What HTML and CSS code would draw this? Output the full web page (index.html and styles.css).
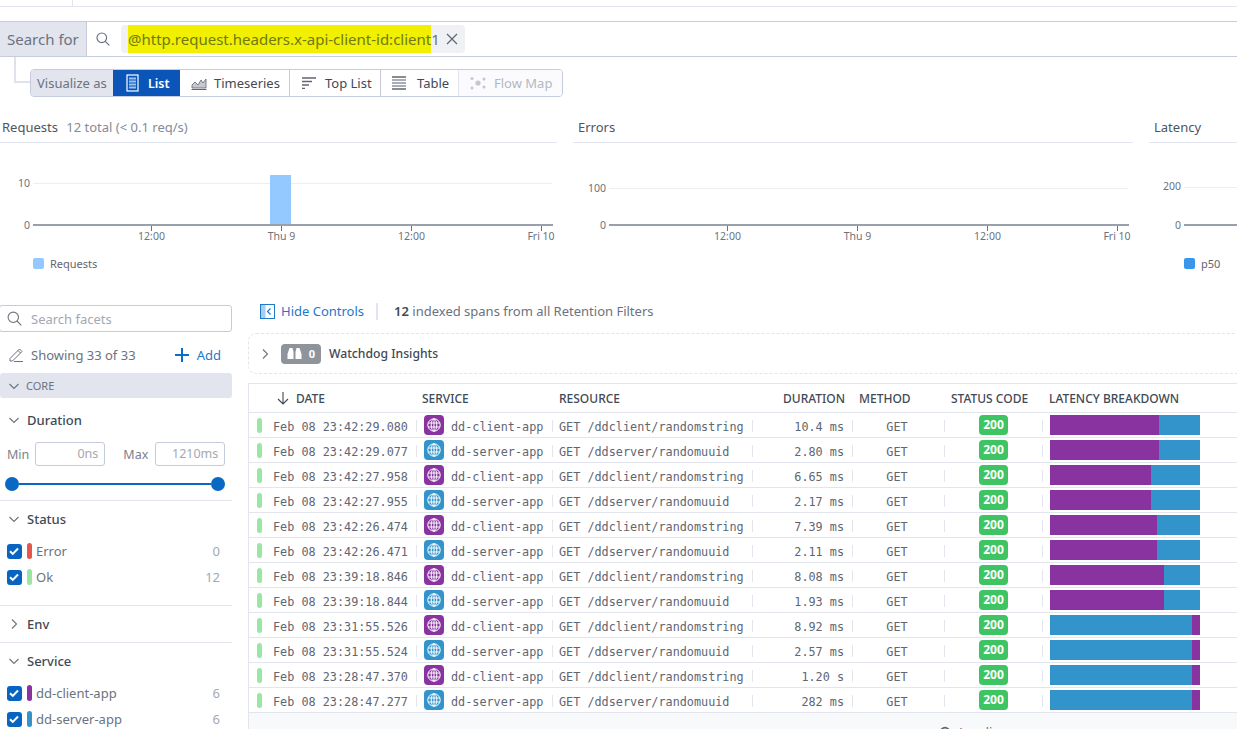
FILE: index.html
```html
<!DOCTYPE html>
<html lang="en">
<head>
<meta charset="utf-8">
<title>Trace Explorer</title>
<link rel="stylesheet" href="styles.css">
</head>
<body>
<svg class="defs" width="0" height="0">
  <symbol id="globe" viewBox="0 0 20 20">
    <g fill="none" stroke="#fff" stroke-width="1">
      <circle cx="10" cy="10" r="6.200"/>
      <ellipse cx="10" cy="10" rx="2.800" ry="6.200"/>
      <path d="M10 3.800v12.400M4.200 8h11.600M4.200 12h11.600"/>
    </g>
  </symbol>
  <symbol id="chev-down" viewBox="0 0 12 12"><path d="M1.500 4l4.500 4.500L10.500 4" fill="none" stroke="#6b7280" stroke-width="1.100"/></symbol>
  <symbol id="chev-right" viewBox="0 0 12 12"><path d="M4 1.500L8.500 6 4 10.500" fill="none" stroke="#6b7280" stroke-width="1.100"/></symbol>
  <symbol id="check" viewBox="0 0 14 14"><path d="M3 7.200l2.800 2.700L11 4.500" fill="none" stroke="#fff" stroke-width="2"/></symbol>
</svg>

<div class="topstrip"><span class="topstrip-tick"></span></div>

<div class="searchbar">
  <div class="search-label">Search for</div>
  <svg class="search-icon" width="14" height="14" viewBox="0 0 14 14"><circle cx="5.800" cy="5.800" r="4.800" fill="none" stroke="#6b7280" stroke-width="1.200"/><path d="M9.300 9.300L13.300 13.300" stroke="#6b7280" stroke-width="1.200"/></svg>
  <div class="chip"><span class="chip-text"><mark class="hl">@http.request.headers.x-api-client-id:client</mark>1</span>
    <svg class="chip-x" width="12" height="12" viewBox="0 0 12 12"><path d="M1 1l10 10M11 1L1 11" stroke="#5f6672" stroke-width="1.200"/></svg>
  </div>
</div>

<div class="vizrow">
  <span class="connector"></span>
  <div class="viz">
    <div class="viz-label">Visualize as</div>
    <div class="viz-btn viz-list">
      <svg width="13" height="18" viewBox="0 0 13 18"><rect x="1" y="1" width="11" height="16" fill="none" stroke="#fff" stroke-width="1.200"/><path d="M3 4.500h7M3 7.500h7M3 10.500h7M3 13.500h7" stroke="#9cc2ee" stroke-width="2"/></svg>
      <span>List</span>
    </div>
    <div class="viz-btn viz-ts">
      <svg width="16" height="13" viewBox="0 0 16 13"><path d="M0.500 12.500h15" stroke="#5f6672"/><path d="M1 11V8l3-3 3 3 3-5 2 3 3-4v9z" fill="#c5c9d2" stroke="#5f6672" stroke-width=".8"/></svg>
      <span>Timeseries</span>
    </div>
    <div class="viz-btn viz-top">
      <svg width="14" height="12" viewBox="0 0 14 12"><path d="M0 1h14M0 4.500h10M0 8h7M0 11.300h3" stroke="#5f6672" stroke-width="1.300"/></svg>
      <span>Top List</span>
    </div>
    <div class="viz-btn viz-table">
      <svg width="14" height="14" viewBox="0 0 14 14"><path d="M0 1h14M0 13h14" stroke="#5f6672" stroke-width="1.300"/><path d="M0 4h14M0 7h14M0 10h14" stroke="#a8adb8" stroke-width="2"/></svg>
      <span>Table</span>
    </div>
    <div class="viz-btn viz-flow">
      <svg width="16" height="14" viewBox="0 0 16 14"><g fill="#c3c7cf"><circle cx="8" cy="7" r="2.600"/><circle cx="2" cy="2.500" r="1.500"/><circle cx="2" cy="12" r="1.500"/><circle cx="14" cy="3" r="1.500"/><circle cx="14" cy="11" r="1.500"/></g></svg>
      <span>Flow Map</span>
    </div>
  </div>
</div>

<div class="charts">
  <section class="chart chart-req">
    <h3 class="chart-title">Requests <span class="chart-sub">12 total (&lt; 0.1 req/s)</span></h3>
    <svg class="plot" width="557" height="104" viewBox="0 143 557 104">
      <path class="grid" d="M33 183.500H552"/>
      <rect x="270" y="175" width="21" height="50" fill="#94c9ff"/>
      <path class="axis" d="M33 225H553"/>
      <path class="tick" d="M151.500 226v5M281.500 226v5M411.500 226v5M541.500 226v5"/>
      <text class="lbl" x="30" y="187" text-anchor="end">10</text>
      <text class="lbl" x="30" y="229" text-anchor="end">0</text>
      <text class="lbl" x="151.500" y="240" text-anchor="middle">12:00</text>
      <text class="lbl" x="281.500" y="240" text-anchor="middle">Thu 9</text>
      <text class="lbl" x="411.500" y="240" text-anchor="middle">12:00</text>
      <text class="lbl" x="541" y="240" text-anchor="middle">Fri 10</text>
    </svg>
    <div class="legend legend-req"><i class="swatch swatch-req"></i>Requests</div>
  </section>
  <section class="chart chart-err">
    <h3 class="chart-title">Errors</h3>
    <svg class="plot" width="560" height="104" viewBox="573 143 560 104">
      <path class="grid" d="M609 188.500H1128"/>
      <path class="axis" d="M609 225H1129"/>
      <path class="tick" d="M727.500 226v5M857.500 226v5M987.500 226v5M1117.500 226v5"/>
      <text class="lbl" x="606" y="192" text-anchor="end">100</text>
      <text class="lbl" x="606" y="229" text-anchor="end">0</text>
      <text class="lbl" x="727.500" y="240" text-anchor="middle">12:00</text>
      <text class="lbl" x="857.500" y="240" text-anchor="middle">Thu 9</text>
      <text class="lbl" x="987.500" y="240" text-anchor="middle">12:00</text>
      <text class="lbl" x="1117" y="240" text-anchor="middle">Fri 10</text>
    </svg>
  </section>
  <section class="chart chart-lat">
    <h3 class="chart-title">Latency</h3>
    <svg class="plot" width="100" height="104" viewBox="1149 143 100 104">
      <path class="grid" d="M1184 187.500H1249"/>
      <path class="axis" d="M1184 225H1249"/>
      <text class="lbl" x="1181" y="190" text-anchor="end">200</text>
      <text class="lbl" x="1181" y="229" text-anchor="end">0</text>
    </svg>
    <div class="legend legend-lat"><i class="swatch swatch-lat"></i>p50</div>
  </section>
</div>

<main class="main">
  <aside class="side">
    <div class="facet-search">
      <svg width="15" height="15" viewBox="0 0 15 15"><circle cx="6.300" cy="6.300" r="5.200" fill="none" stroke="#6b7280" stroke-width="1.100"/><path d="M10 10l4.300 4.300" stroke="#6b7280" stroke-width="1.100"/></svg>
      <span>Search facets</span>
    </div>
    <div class="showing">
      <svg width="15" height="15" viewBox="0 0 15 15"><path d="M1 11.500L10.500 2l2.500 2.500L3.500 14H1zM9 3.500l2.500 2.500" fill="none" stroke="#6b7280"/><path d="M5 14.500h9" stroke="#6b7280"/></svg>
      <span class="showing-text">Showing 33 of 33</span>
      <span class="add"><svg width="14" height="14" viewBox="0 0 14 14"><path d="M7 0v14M0 7h14" stroke="#0a6ec5" stroke-width="2"/></svg>Add</span>
    </div>
    <div class="core"><svg width="12" height="12"><use href="#chev-down"/></svg>CORE</div>

    <div class="facet facet-duration">
      <div class="facet-head"><svg width="12" height="12"><use href="#chev-down"/></svg>Duration</div>
      <div class="minmax">
        <span>Min</span><span class="mm-input">0ns</span>
        <span class="max-label">Max</span><span class="mm-input mm-max">1210ms</span>
      </div>
      <div class="slider"><i class="knob"></i><i class="track"></i><i class="knob"></i></div>
    </div>

    <div class="facet facet-status">
      <div class="facet-head"><svg width="12" height="12"><use href="#chev-down"/></svg>Status</div>
      <ul class="values">
        <li><span class="cb"><svg width="14" height="14"><use href="#check"/></svg></span><i class="tag red"></i><span class="v">Error</span><span class="n">0</span></li>
        <li><span class="cb"><svg width="14" height="14"><use href="#check"/></svg></span><i class="tag green"></i><span class="v">Ok</span><span class="n">12</span></li>
      </ul>
    </div>

    <div class="facet facet-env">
      <div class="facet-head"><svg width="12" height="12"><use href="#chev-right"/></svg>Env</div>
    </div>

    <div class="facet facet-service">
      <div class="facet-head"><svg width="12" height="12"><use href="#chev-down"/></svg>Service</div>
      <ul class="values">
        <li><span class="cb"><svg width="14" height="14"><use href="#check"/></svg></span><i class="tag purple"></i><span class="v">dd-client-app</span><span class="n">6</span></li>
        <li><span class="cb"><svg width="14" height="14"><use href="#check"/></svg></span><i class="tag blue"></i><span class="v">dd-server-app</span><span class="n">6</span></li>
      </ul>
    </div>
  </aside>

  <div class="content">
    <div class="controls">
      <svg width="15" height="15" viewBox="0 0 15 15"><rect x=".5" y=".5" width="14" height="14" fill="none" stroke="#1f78c8"/><rect x="1" y="1" width="4.500" height="13" fill="#a9cdef"/><path d="M10.500 4.500L7.500 7.500l3 3" fill="none" stroke="#1f78c8" stroke-width="1.200"/></svg>
      <span class="hide">Hide Controls</span>
      <i class="ctl-sep"></i>
      <span class="count"><b>12</b> indexed spans from all Retention Filters</span>
    </div>

    <div class="watchdog">
      <svg width="12" height="12"><use href="#chev-right"/></svg>
      <span class="wd-badge">
        <svg width="15" height="13" viewBox="0 0 15 13"><path d="M2.500 1h3l1 4v7H0.500V7zM9.500 1h3l2 6v5H8.500V5z" fill="#fff"/></svg>
        <b>0</b>
      </span>
      <span class="wd-text">Watchdog Insights</span>
    </div>

    <div class="table">
      <div class="row head">
        <div class="h-date"><svg width="12" height="14" viewBox="0 0 12 14"><path d="M6 1v12M1 8l5 5 5-5" fill="none" stroke="#3f4a56" stroke-width="1.100"/></svg>DATE</div>
        <div class="h-service">SERVICE</div>
        <div class="h-resource">RESOURCE</div>
        <div class="h-duration">DURATION</div>
        <div class="h-method">METHOD</div>
        <div class="h-status">STATUS CODE</div>
        <div class="h-latency">LATENCY BREAKDOWN</div>
      </div>

      <div class="row"><div class="c-pill"><i></i></div><div class="c-date t">Feb 08 23:42:29.080</div><div class="c c-service"><span class="svc svc-client"><svg width="20" height="20"><use href="#globe"/></svg></span><span class="t">dd-client-app</span></div><div class="c c-res"><span class="t">GET /ddclient/randomstring</span></div><div class="c c-dur"><span class="t">10.4 ms</span></div><div class="c c-meth"><span class="t">GET</span></div><div class="c c-stat"><b class="code">200</b></div><div class="c c-lat"><span class="bar"><i class="p" style="width:109px"></i><i class="b"></i></span></div></div>
      <div class="row"><div class="c-pill"><i></i></div><div class="c-date t">Feb 08 23:42:29.077</div><div class="c c-service"><span class="svc svc-server"><svg width="20" height="20"><use href="#globe"/></svg></span><span class="t">dd-server-app</span></div><div class="c c-res"><span class="t">GET /ddserver/randomuuid</span></div><div class="c c-dur"><span class="t">2.80 ms</span></div><div class="c c-meth"><span class="t">GET</span></div><div class="c c-stat"><b class="code">200</b></div><div class="c c-lat"><span class="bar"><i class="p" style="width:109px"></i><i class="b"></i></span></div></div>
      <div class="row"><div class="c-pill"><i></i></div><div class="c-date t">Feb 08 23:42:27.958</div><div class="c c-service"><span class="svc svc-client"><svg width="20" height="20"><use href="#globe"/></svg></span><span class="t">dd-client-app</span></div><div class="c c-res"><span class="t">GET /ddclient/randomstring</span></div><div class="c c-dur"><span class="t">6.65 ms</span></div><div class="c c-meth"><span class="t">GET</span></div><div class="c c-stat"><b class="code">200</b></div><div class="c c-lat"><span class="bar"><i class="p" style="width:101px"></i><i class="b"></i></span></div></div>
      <div class="row"><div class="c-pill"><i></i></div><div class="c-date t">Feb 08 23:42:27.955</div><div class="c c-service"><span class="svc svc-server"><svg width="20" height="20"><use href="#globe"/></svg></span><span class="t">dd-server-app</span></div><div class="c c-res"><span class="t">GET /ddserver/randomuuid</span></div><div class="c c-dur"><span class="t">2.17 ms</span></div><div class="c c-meth"><span class="t">GET</span></div><div class="c c-stat"><b class="code">200</b></div><div class="c c-lat"><span class="bar"><i class="p" style="width:101px"></i><i class="b"></i></span></div></div>
      <div class="row"><div class="c-pill"><i></i></div><div class="c-date t">Feb 08 23:42:26.474</div><div class="c c-service"><span class="svc svc-client"><svg width="20" height="20"><use href="#globe"/></svg></span><span class="t">dd-client-app</span></div><div class="c c-res"><span class="t">GET /ddclient/randomstring</span></div><div class="c c-dur"><span class="t">7.39 ms</span></div><div class="c c-meth"><span class="t">GET</span></div><div class="c c-stat"><b class="code">200</b></div><div class="c c-lat"><span class="bar"><i class="p" style="width:107px"></i><i class="b"></i></span></div></div>
      <div class="row"><div class="c-pill"><i></i></div><div class="c-date t">Feb 08 23:42:26.471</div><div class="c c-service"><span class="svc svc-server"><svg width="20" height="20"><use href="#globe"/></svg></span><span class="t">dd-server-app</span></div><div class="c c-res"><span class="t">GET /ddserver/randomuuid</span></div><div class="c c-dur"><span class="t">2.11 ms</span></div><div class="c c-meth"><span class="t">GET</span></div><div class="c c-stat"><b class="code">200</b></div><div class="c c-lat"><span class="bar"><i class="p" style="width:107px"></i><i class="b"></i></span></div></div>
      <div class="row"><div class="c-pill"><i></i></div><div class="c-date t">Feb 08 23:39:18.846</div><div class="c c-service"><span class="svc svc-client"><svg width="20" height="20"><use href="#globe"/></svg></span><span class="t">dd-client-app</span></div><div class="c c-res"><span class="t">GET /ddclient/randomstring</span></div><div class="c c-dur"><span class="t">8.08 ms</span></div><div class="c c-meth"><span class="t">GET</span></div><div class="c c-stat"><b class="code">200</b></div><div class="c c-lat"><span class="bar"><i class="p" style="width:114px"></i><i class="b"></i></span></div></div>
      <div class="row"><div class="c-pill"><i></i></div><div class="c-date t">Feb 08 23:39:18.844</div><div class="c c-service"><span class="svc svc-server"><svg width="20" height="20"><use href="#globe"/></svg></span><span class="t">dd-server-app</span></div><div class="c c-res"><span class="t">GET /ddserver/randomuuid</span></div><div class="c c-dur"><span class="t">1.93 ms</span></div><div class="c c-meth"><span class="t">GET</span></div><div class="c c-stat"><b class="code">200</b></div><div class="c c-lat"><span class="bar"><i class="p" style="width:114px"></i><i class="b"></i></span></div></div>
      <div class="row"><div class="c-pill"><i></i></div><div class="c-date t">Feb 08 23:31:55.526</div><div class="c c-service"><span class="svc svc-client"><svg width="20" height="20"><use href="#globe"/></svg></span><span class="t">dd-client-app</span></div><div class="c c-res"><span class="t">GET /ddclient/randomstring</span></div><div class="c c-dur"><span class="t">8.92 ms</span></div><div class="c c-meth"><span class="t">GET</span></div><div class="c c-stat"><b class="code">200</b></div><div class="c c-lat"><span class="bar"><i class="b" style="width:142px"></i><i class="p"></i></span></div></div>
      <div class="row"><div class="c-pill"><i></i></div><div class="c-date t">Feb 08 23:31:55.524</div><div class="c c-service"><span class="svc svc-server"><svg width="20" height="20"><use href="#globe"/></svg></span><span class="t">dd-server-app</span></div><div class="c c-res"><span class="t">GET /ddserver/randomuuid</span></div><div class="c c-dur"><span class="t">2.57 ms</span></div><div class="c c-meth"><span class="t">GET</span></div><div class="c c-stat"><b class="code">200</b></div><div class="c c-lat"><span class="bar"><i class="b" style="width:142px"></i><i class="p"></i></span></div></div>
      <div class="row"><div class="c-pill"><i></i></div><div class="c-date t">Feb 08 23:28:47.370</div><div class="c c-service"><span class="svc svc-client"><svg width="20" height="20"><use href="#globe"/></svg></span><span class="t">dd-client-app</span></div><div class="c c-res"><span class="t">GET /ddclient/randomstring</span></div><div class="c c-dur"><span class="t">1.20 s</span></div><div class="c c-meth"><span class="t">GET</span></div><div class="c c-stat"><b class="code">200</b></div><div class="c c-lat"><span class="bar"><i class="b" style="width:142px"></i><i class="p"></i></span></div></div>
      <div class="row"><div class="c-pill"><i></i></div><div class="c-date t">Feb 08 23:28:47.277</div><div class="c c-service"><span class="svc svc-server"><svg width="20" height="20"><use href="#globe"/></svg></span><span class="t">dd-server-app</span></div><div class="c c-res"><span class="t">GET /ddserver/randomuuid</span></div><div class="c c-dur"><span class="t">282 ms</span></div><div class="c c-meth"><span class="t">GET</span></div><div class="c c-stat"><b class="code">200</b></div><div class="c c-lat"><span class="bar"><i class="b" style="width:142px"></i><i class="p"></i></span></div></div>

      <div class="loading"><svg width="12" height="12" viewBox="0 0 14 14"><path d="M2 7a5 5 0 1 1 5 5" fill="none" stroke="#5f6672" stroke-width="2"/></svg><span>Loading</span></div>
    </div>
  </div>
</main>
</body>
</html>
```
FILE: styles.css
```css
* { box-sizing: border-box; }
html, body { margin: 0; padding: 0; height: 729px; overflow: hidden; background: #fff; }
body { font-family: "Noto Sans", sans-serif; font-size: 13px; color: #3f4a56; }
.defs { position: absolute; }

.topstrip { height: 7px; border-bottom: 1px solid #e2e5ed; padding-left: 72px; }
.topstrip-tick { display: block; width: 1px; height: 6px; background: #e2e5ed; }

.searchbar { margin-top: 14px; height: 36px; display: flex; align-items: center; border-top: 1px solid #c5cbda; border-bottom: 1px solid #c5cbda; }
.search-label { width: 87px; height: 100%; background: #e2e5ed; border-right: 1px solid #c5cbda; padding-left: 7px; line-height: 34px; font-size: 15px; color: #6b7280; }
.search-icon { margin-left: 9px; }
.chip { margin-left: 11px; width: 344px; height: 28px; background: #eff1f5; border-radius: 4px; display: flex; align-items: center; padding-left: 7px; font-size: 15px; color: #6b7280; white-space: nowrap; }
.chip-text { width: 318px; }
.hl { background: #f0f000; color: #6f7a14; padding: 4px 0; }
.chip-x { margin-left: 0; }

.vizrow { height: 40px; padding-left: 14px; display: flex; align-items: flex-start; }
.connector { width: 16px; height: 26px; border-left: 2px solid #dfe2ea; border-bottom: 2px solid #dfe2ea; }
.viz { margin-top: 12px; height: 28px; display: flex; border: 1px solid #c5cbda; border-radius: 4px; overflow: hidden; font-size: 13px; }
.viz-label { width: 82px; background: #e2e5ed; padding-left: 6px; line-height: 26px; color: #6b7280; }
.viz-btn { display: flex; align-items: center; height: 100%; border-right: 1px solid #c5cbda; color: #3f4a56; }
.viz-list { width: 67px; background: #0b55b8; color: #fff; font-weight: 600; font-size: 12.500px; padding-left: 13px; gap: 9px; border-right: 0; }
.viz-ts { width: 110px; padding-left: 11px; gap: 7px; }
.viz-top { width: 91px; padding-left: 12px; gap: 9px; }
.viz-table { width: 78px; padding-left: 11px; gap: 11px; border-right-color: #e2e5ed; }
.viz-flow { width: 103px; padding-left: 11px; gap: 8px; color: #b3b8c2; background: #fbfbfd; border-right: 0; }

.charts { display: flex; gap: 16px; margin-top: 15px; height: 174px; overflow: hidden; }
.chart { flex: none; }
.chart-req { width: 557px; }
.chart-err { width: 560px; }
.chart-lat { width: 100px; }
.chart-title { margin: 0; height: 31px; border-bottom: 1px solid #e2e5ed; font-size: 13px; font-weight: 400; line-height: 30px; padding-left: 2px; color: #4d5562; white-space: nowrap; }
.chart-err .chart-title { padding-left: 5px; }
.chart-lat .chart-title { padding-left: 5px; }
.chart-sub { margin-left: 5px; color: #858b96; }
.plot { display: block; }
.grid { stroke: #eceef2; stroke-width: 1; fill: none; }
.axis { stroke: #9a9fac; stroke-width: 2; fill: none; }
.tick { stroke: #6b7280; stroke-width: 1; fill: none; }
.lbl { font-family: "Noto Sans", sans-serif; font-size: 10.500px; fill: #6b7280; }
.legend { display: flex; align-items: center; gap: 6px; font-size: 11px; color: #5f6672; height: 24px; margin-top: 4px; }
.legend-req { padding-left: 33px; }
.legend-lat { padding-left: 35px; }
.swatch { width: 11px; height: 11px; border-radius: 2px; }
.swatch-req { background: #94c9ff; }
.swatch-lat { background: #3a96ea; }

.main { display: flex; gap: 16px; padding-top: 11px; }
.side { width: 232px; flex: none; margin-top: 8px; }
.facet-search { height: 27px; margin-left: -1px; border: 1px solid #c5cbda; border-radius: 3px; display: flex; align-items: center; gap: 9px; padding-left: 7px; color: #a3a8b2; }
.showing { display: flex; align-items: center; margin-top: 9px; height: 27px; padding-left: 9px; color: #6b7280; }
.showing-text { margin-left: 7px; }
.add { margin-left: auto; margin-right: 11px; display: flex; align-items: center; gap: 8px; color: #1f78c8; }
.core { margin-top: 5px; height: 25px; background: #e2e5ed; border-radius: 3px; display: flex; align-items: center; gap: 6px; padding-left: 8px; font-size: 11px; color: #6b7280; }

.facet { border-bottom: 1px solid #e2e5ed; }
.facet-head { display: flex; align-items: center; gap: 7px; padding-left: 8px; height: 20px; font-weight: 500; color: #3f4a56; }
.facet-duration { padding-top: 12px; height: 103px; }
.minmax { display: flex; align-items: center; margin-top: 12px; padding-left: 7px; color: #7b818c; font-size: 12.500px; }
.mm-input { width: 70px; height: 24px; margin-left: 7px; border: 1px solid #c5cbda; border-radius: 3px; text-align: right; padding-right: 6px; line-height: 22px; color: #a3a8b2; }
.minmax span:nth-child(2) { margin-left: 6px; }
.max-label { margin-left: 18px; }
.slider { display: flex; align-items: center; margin: 11px 7px 0 5px; }
.knob { width: 14px; height: 14px; border-radius: 50%; background: #0868c4; flex: none; }
.track { flex: 1; height: 2px; background: #0868c4; }
.facet-status { padding-top: 8px; height: 105px; }
.facet-env { padding-top: 8px; height: 37px; }
.facet-service { padding-top: 8px; border-bottom: 0; }
.values { list-style: none; margin: 9px 0 0; padding: 0 12px 0 7px; }
.values li { display: flex; align-items: center; height: 26px; }
.cb { width: 15px; height: 15px; background: #0765c1; border-radius: 3px; display: block; line-height: 0; padding: 0; }
.tag { width: 5px; height: 16px; border-radius: 2.500px; margin-left: 5px; }
.red { background: #e5574d; }
.green { background: #9ae6a5; }
.purple { background: #8833a0; }
.blue { background: #3294cb; }
.v { margin-left: 4px; color: #6b7280; }
.n { margin-left: auto; color: #a3a8b2; }

.content { flex: 1; min-width: 0; }
.controls { display: flex; align-items: center; height: 28px; padding-left: 12px; }
.hide { margin-left: 6px; color: #1f78c8; }
.ctl-sep { width: 2px; height: 17px; background: #e2e5ed; margin: 0 16px 0 12px; }
.count { color: #6b7280; }
.count b { font-weight: 600; color: #3f4a56; }
.watchdog { margin-top: 8px; height: 41px; width: 1000px; border: 1px dashed #e2e5ed; border-radius: 8px; display: flex; align-items: center; padding-left: 10px; }
.wd-badge { width: 40px; height: 20px; margin-left: 10px; background: #8f949c; border-radius: 4px; display: flex; align-items: center; justify-content: center; gap: 7px; color: #fff; font-size: 11px; }
.wd-text { margin-left: 8px; font-size: 12.200px; font-weight: 500; color: #3f4a56; }

.table { margin-top: 9px; width: 1000px; height: 400px; border-top: 1px solid #e2e5ed; border-left: 1px solid #e2e5ed; background: #f8f9fb; }
.row { display: grid; grid-template-columns: 24px 143px 136px 200px 100px 92px 98px 1fr; height: 25px; align-items: center; border-bottom: 1px solid #e2e5ed; background: #fff; font-family: "DejaVu Sans Mono", monospace; font-size: 11.800px; color: #5f6672; white-space: nowrap; }
.head { height: 29px; font-family: "Noto Sans", sans-serif; font-size: 12px; font-weight: 500; color: #3f4a56; }
.h-date { grid-column: 1 / 3; display: flex; align-items: center; gap: 7px; padding-left: 28px; }
.h-service { padding-left: 6px; }
.h-resource { padding-left: 7px; }
.h-duration { text-align: right; padding-right: 7px; }
.h-method { padding-left: 7px; }
.h-status { padding-left: 7px; }
.h-latency { padding-left: 7px; }
.c-pill i { display: block; width: 5px; height: 15px; margin-left: 8px; border-radius: 2.500px; background: #9ae6a5; }
.t { padding-top: 3px; }
.c { display: flex; align-items: center; height: 100%; }
.c::before { content: ""; width: 1px; height: 12px; background: #e2e5ed; flex: none; margin: 1px 6px 0 0; }
.c-service::before { margin-right: 7px; }
.svc { width: 20px; height: 20px; border-radius: 4px; margin-right: 7px; flex: none; line-height: 0; }
.svc-client { background: #8833a0; }
.svc-server { background: #3294cb; }
.c-dur span { margin-left: auto; padding-right: 8px; }
.c-meth span { flex: 1; text-align: center; padding-right: 9px; }
.c-stat::before { margin-right: 0; }
.code { margin-left: 34px; width: 29px; height: 20px; border-radius: 4px; background: #3fc463; color: #fff; font-family: "Noto Sans", sans-serif; font-size: 12px; font-weight: 700; line-height: 20px; text-align: center; }
.c-lat::before { margin-right: 7px; }
.bar { display: flex; width: 150px; height: 20px; }
.bar i { display: block; height: 100%; }
.bar .p { background: #8833a0; }
.bar .b { background: #3294cb; }
.bar i:last-child { flex: 1; }
.loading { display: flex; align-items: center; gap: 8px; padding: 10px 0 0 690px; color: #6b7280; }
```
